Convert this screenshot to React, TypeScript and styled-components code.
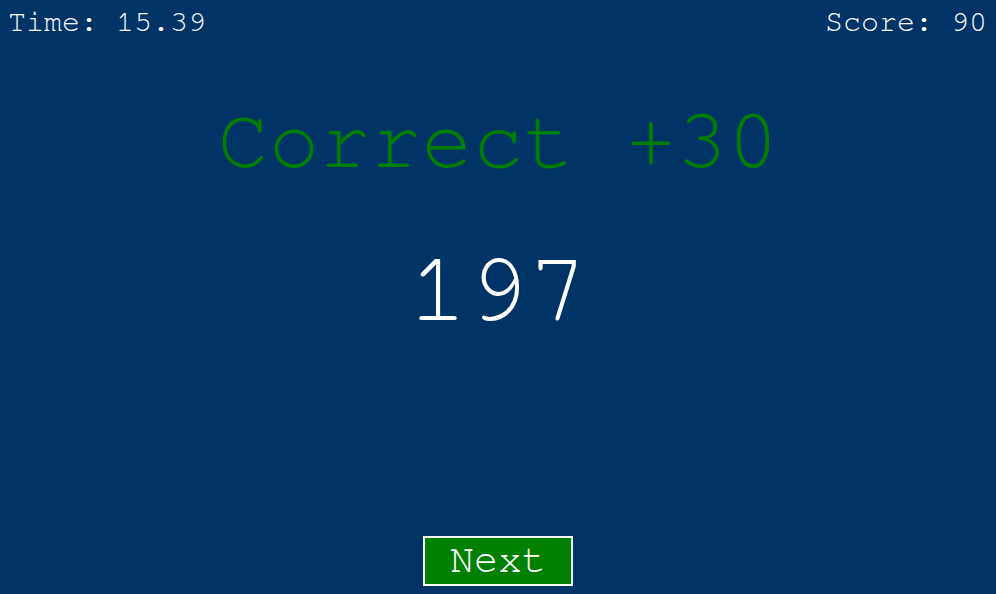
import React from "react";
import styled, { createGlobalStyle } from "styled-components";

const Global = createGlobalStyle`
  html, body { margin: 0; padding: 0; background: #003366; }
  body { font-family: FreeMono, "Liberation Mono", monospace; }
`;

const Screen = styled.div`
  width: 996px;
  height: 594px;
  background: #003366;
  color: #ffffff;
  display: flex;
  flex-direction: column;
  align-items: center;
  box-sizing: border-box;
  overflow: hidden;
`;

const TopBar = styled.div`
  align-self: stretch;
  display: flex;
  justify-content: space-between;
  padding: 5px 9px 0 8px;
`;

const Stat = styled.div`
  font-size: 30px;
  line-height: 34px;
  white-space: pre;
`;

const Verdict = styled.div<{ $ok: boolean }>`
  margin-top: 57px;
  font-size: 85px;
  line-height: 92px;
  color: ${(p) => (p.$ok ? "#008000" : "#cc0000")};
  white-space: pre;
`;

const Answer = styled.div`
  margin-top: 46px;
  font-size: 100px;
  line-height: 112px;
`;

const Spacer = styled.div`
  flex: 1;
`;

const NextButton = styled.button`
  margin-bottom: 8px;
  background: #008000;
  color: #ffffff;
  border: 2px solid #ffffff;
  font-family: FreeMono, "Liberation Mono", monospace;
  font-size: 40px;
  line-height: 44px;
  padding: 0 25px 2px;
  cursor: pointer;
`;

export default function App() {
  return (
    <Screen>
      <Global />
      <TopBar>
        <Stat>Time: 15.39</Stat>
        <Stat>Score: 90</Stat>
      </TopBar>
      <Verdict $ok>Correct +30</Verdict>
      <Answer>197</Answer>
      <Spacer />
      <NextButton>Next</NextButton>
    </Screen>
  );
}
